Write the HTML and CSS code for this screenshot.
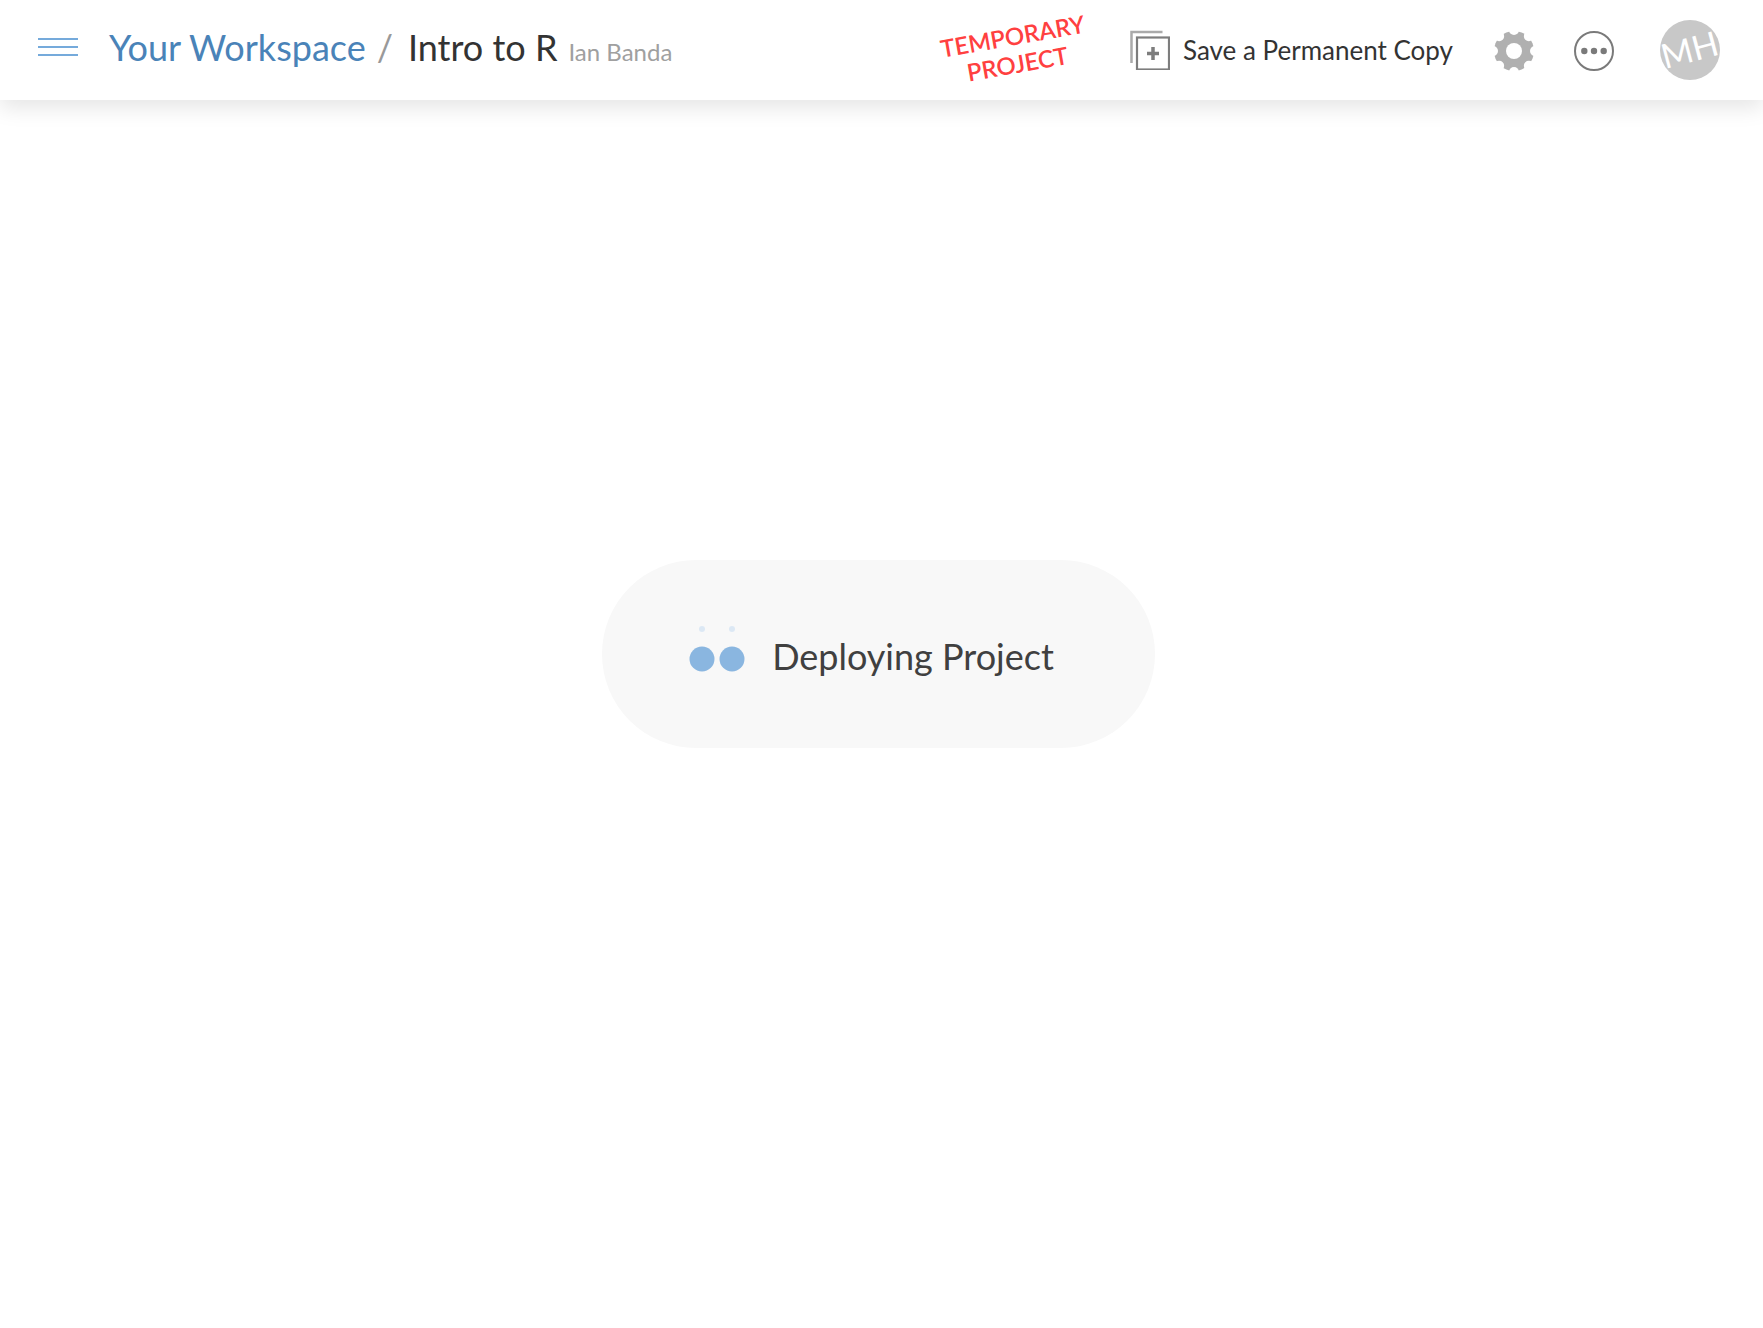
FILE: index.html
```html
<!DOCTYPE html>
<html lang="en">
<head>
<meta charset="utf-8">
<meta name="viewport" content="width=device-width, initial-scale=1">
<title>Intro to R</title>
<link rel="stylesheet" href="styles.css">
</head>
<body>
<header class="topbar">
  <div class="topbar-left">
    <button class="icon-button menu-button" type="button" aria-label="Menu">
      <svg width="40" height="18" viewBox="0 0 40 18" fill="#75aadb"><path d="M0 0h40v2H0zM0 8h40v2H0zM0 16h40v2H0z"/></svg>
    </button>
    <nav class="breadcrumb" aria-label="Breadcrumb">
      <a class="workspace" href="#">Your Workspace</a>
      <span class="slash">/</span>
      <h1 class="project">Intro to R</h1>
      <span class="owner">Ian Banda</span>
    </nav>
  </div>
  <div class="topbar-right">
    <p class="temporary">TEMPORARY<br>PROJECT</p>
    <button class="icon-button save-button" type="button">
      <svg width="40" height="40" viewBox="0 0 40 40" fill="none">
        <path d="M1.500 33V2h31" stroke="#aaa" stroke-width="2.500"/>
        <rect x="7" y="7.500" width="32" height="32" stroke="#7d7d7d" stroke-width="2.200"/>
        <path d="M23 17v13M17 23.500h12" stroke="#7d7d7d" stroke-width="3.500"/>
      </svg>
      <span>Save a Permanent Copy</span>
    </button>
    <button class="icon-button round-icon" type="button" aria-label="Settings">
      <svg width="40" height="40" viewBox="0 0 40 40">
        <mask id="gear">
          <circle cx="20" cy="20" r="20" fill="#fff"/>
          <circle cx="20" cy="20" r="8"/>
          <g id="notches">
            <circle cx="20" cy="-1" r="5"/><circle cx="20" cy="41" r="5"/>
            <circle cx="-1" cy="20" r="5"/><circle cx="41" cy="20" r="5"/>
          </g>
          <use href="#notches" transform="rotate(45 20 20)"/>
        </mask>
        <rect width="40" height="40" fill="#b0b0b0" mask="url(#gear)"/>
      </svg>
    </button>
    <button class="icon-button round-icon" type="button" aria-label="More">
      <svg width="40" height="40" viewBox="0 0 40 40" fill="#7a7a7a">
        <circle cx="20" cy="20" r="19" fill="none" stroke="#7a7a7a" stroke-width="2"/>
        <circle cx="10.300" cy="20" r="3.200"/><circle cx="20" cy="20" r="3.200"/><circle cx="29.700" cy="20" r="3.200"/>
      </svg>
    </button>
    <button class="icon-button avatar" type="button"><span>MH</span></button>
  </div>
</header>
<main class="content">
  <div class="status" role="status">
    <svg width="56" height="76" viewBox="0 0 56 76" fill="#8ab6e0">
      <circle cx="13" cy="13" r="3" fill="#dce8f4"/><circle cx="43" cy="13" r="3" fill="#dce8f4"/>
      <circle cx="13" cy="43" r="12.500"/><circle cx="43" cy="43" r="12.500"/>
    </svg>
    <span>Deploying Project</span>
  </div>
</main>
</body>
</html>
```
FILE: styles.css
```css
* {
  box-sizing: border-box;
}

body {
  margin: 0;
  min-height: 100vh;
  display: flex;
  flex-direction: column;
  background: #fff;
  color: #333;
  font-family: Lato, "Liberation Sans", sans-serif;
}

.topbar {
  display: flex;
  justify-content: space-between;
  align-items: center;
  height: 100px;
  padding: 0 43px 0 38px;
  background: #fff;
  box-shadow: 0 8px 20px rgba(0, 0, 0, 0.1);
}

.topbar-left {
  display: flex;
  align-items: center;
  gap: 31px;
  padding-bottom: 6px;
}

.topbar-right {
  display: flex;
  align-items: center;
  gap: 40px;
}

.icon-button {
  display: flex;
  align-items: center;
  padding: 0;
  border: 0;
  background: none;
  color: inherit;
  font: inherit;
  cursor: pointer;
}

.breadcrumb {
  display: flex;
  align-items: baseline;
  gap: 11px;
  font-size: 36px;
}

.workspace {
  color: #4a83b8;
  text-decoration: none;
}

.slash {
  color: #999;
}

.project {
  margin: 0 0 0 4px;
  font-size: 36px;
  font-weight: 400;
}

.owner {
  color: #a0a0a0;
  font-size: 24px;
}

.temporary {
  margin: 0 2px 0 0;
  color: #ff4040;
  font-size: 24px;
  font-weight: 600;
  line-height: 28px;
  text-align: center;
  transform: rotate(-10deg);
}

.save-button {
  gap: 13px;
  font-size: 26px;
}

.save-button span {
  padding: 0 1px 1px 0;
}

.round-icon {
  padding-top: 2px;
}

.avatar {
  justify-content: center;
  width: 60px;
  height: 60px;
  margin-left: 6px;
  border-radius: 50%;
  background: #c8c8c8;
  color: #fff;
  font-size: 34px;
}

.avatar span {
  padding-bottom: 4px;
  transform: rotate(-15deg);
}

.content {
  flex: 1;
  display: flex;
  align-items: center;
  justify-content: center;
  padding: 0 6px 120px 0;
}

.status {
  display: flex;
  align-items: center;
  gap: 27px;
  padding: 56px 101px 56px 87px;
  border-radius: 95px;
  background: #f8f8f8;
  color: #404040;
  font-size: 36px;
}

.status span {
  padding-top: 4px;
}
```
